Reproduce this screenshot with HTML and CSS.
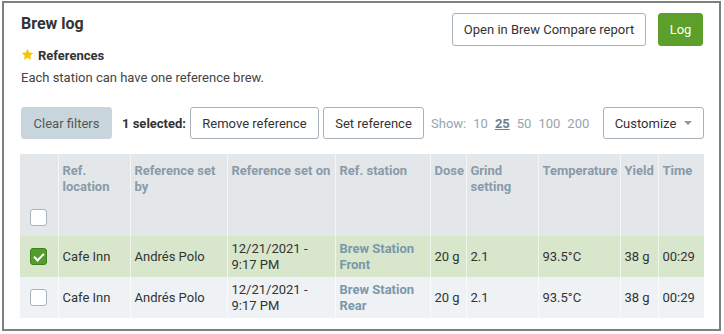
FILE: index.html
```html
<!DOCTYPE html>
<html lang="en">
<head>
    <meta charset="UTF-8">
    <title>Brew log</title>
    <link rel="stylesheet" href="styles.css">
</head>
<body>
    <div class="frame">
        <div class="top">
            <div class="intro">
                <h1 class="title">Brew log</h1>
                <div class="refs">
                    <svg class="star" width="13" height="13" viewBox="0 0 24 24"><path d="M12 1.5l3.1 7 7.6.7-5.7 5 1.7 7.5L12 17.8l-6.7 3.9 1.7-7.5-5.7-5 7.6-.7z" fill="#f7c600"/></svg>
                    <span>References</span>
                </div>
                <p class="desc">Each station can have one reference brew.</p>
            </div>
            <div class="actions">
                <a href="#" class="btn btn-report">Open in Brew Compare report</a>
                <a href="#" class="btn btn-green">Log</a>
            </div>
        </div>

        <div class="toolbar">
            <a href="#" class="btn btn-clear">Clear filters</a>
            <span class="selected">1 selected:</span>
            <a href="#" class="btn btn-remove">Remove reference</a>
            <a href="#" class="btn btn-set">Set reference</a>
            <div class="show">
                <span>Show:</span>
                <a href="#">10</a>
                <a href="#" class="current">25</a>
                <a href="#">50</a>
                <a href="#">100</a>
                <a href="#">200</a>
            </div>
            <a href="#" class="btn btn-custom">Customize <span class="caret"></span></a>
        </div>

        <table class="brews">
            <colgroup>
                <col style="width: 38px">
                <col style="width: 72px">
                <col style="width: 97px">
                <col style="width: 108px">
                <col style="width: 95px">
                <col style="width: 36px">
                <col style="width: 72px">
                <col style="width: 82px">
                <col style="width: 38px">
                <col style="width: 46px">
            </colgroup>
            <thead>
                <tr class="labels">
                    <th></th>
                    <th>Ref. location</th>
                    <th>Reference set by</th>
                    <th>Reference set on</th>
                    <th>Ref. station</th>
                    <th>Dose</th>
                    <th>Grind setting</th>
                    <th>Temperature</th>
                    <th>Yield</th>
                    <th>Time</th>
                </tr>
                <tr class="filters">
                    <th><span class="check"></span></th>
                    <th></th><th></th><th></th><th></th><th></th><th></th><th></th><th></th><th></th>
                </tr>
            </thead>
            <tbody>
                <tr class="picked">
                    <td><span class="check on"></span></td>
                    <td>Cafe Inn</td>
                    <td>Andrés Polo</td>
                    <td>12/21/2021 -<br>9:17 PM</td>
                    <td><a href="#" class="station">Brew Station Front</a></td>
                    <td>20 g</td>
                    <td>2.1</td>
                    <td>93.5°C</td>
                    <td>38 g</td>
                    <td>00:29</td>
                </tr>
                <tr>
                    <td><span class="check"></span></td>
                    <td>Cafe Inn</td>
                    <td>Andrés Polo</td>
                    <td>12/21/2021 -<br>9:17 PM</td>
                    <td><a href="#" class="station">Brew Station Rear</a></td>
                    <td>20 g</td>
                    <td>2.1</td>
                    <td>93.5°C</td>
                    <td>38 g</td>
                    <td>00:29</td>
                </tr>
            </tbody>
        </table>
    </div>
</body>
</html>
```

FILE: styles.css
```css
*{
    margin: 0;
    padding: 0;
    box-sizing: border-box;
}
body{
    font-family: Roboto, "Liberation Sans", sans-serif;
    font-size: 13px;
    color: #333;
    background: #fff;
}
a{
    text-decoration: none;
    color: inherit;
}
.frame{
    width: 719px;
    height: 330px;
    margin: 1px 0 0 2px;
    border: 2px solid #7f7f7f;
    padding: 10px 15px 0 16px;
}
.top{
    display: flex;
    justify-content: space-between;
}
.title{
    font-size: 16px;
    font-weight: bold;
    line-height: 20px;
    margin-top: 1px;
    margin-left: 1px;
    color: #333;
}
.refs{
    display: flex;
    align-items: center;
    gap: 4px;
    margin-top: 13px;
    font-weight: bold;
    line-height: 18px;
}
.star{
    margin-left: 1px;
    margin-top: -3px;
}
.desc{
    margin-top: 4px;
    line-height: 18px;
    margin-left: 1px;
    color: #444;
}
.actions{
    display: flex;
    gap: 12px;
}
.btn{
    display: inline-flex;
    align-items: center;
    justify-content: center;
    height: 33px;
    padding: 0 10px;
    border: 1px solid #a7b1ba;
    border-radius: 3px;
    background: #fff;
    color: #333;
    white-space: nowrap;
}
.btn-report{
    width: 194px;
}
.btn-green{
    background: #5c9f2a;
    border-color: #5c9f2a;
    color: #fff;
    width: 45px;
    margin-right: 1px;
}
.toolbar{
    display: flex;
    align-items: center;
    gap: 4px;
    margin-top: 20px;
}
.toolbar .btn{
    height: 32px;
}
.btn-clear{
    background: #c9d5dd;
    border-color: #c9d5dd;
    color: #555;
    width: 91px;
    margin-left: 1px;
}
.selected{
    font-weight: bold;
    margin-left: 6px;
}
.btn-remove{
    width: 129px;
}
.btn-set{
    width: 101px;
}
.show{
    display: flex;
    gap: 7px;
    margin-left: 3px;
    color: #97a5b1;
}
.show .current{
    color: #6f8190;
    font-weight: bold;
    text-decoration: underline;
}
.btn-custom{
    margin-left: auto;
    width: 101px;
    gap: 8px;
}
.caret{
    width: 0;
    height: 0;
    border-left: 4px solid transparent;
    border-right: 4px solid transparent;
    border-top: 4px solid #8a96a0;
}
.brews{
    margin-top: 15px;
    width: 684px;
    border-collapse: collapse;
    table-layout: fixed;
}
.brews th,
.brews td{
    padding: 0 3px 0 4px;
    text-align: left;
    border-left: 1px solid rgba(255, 255, 255, .6);
}
.brews th:first-child,
.brews td:first-child{
    border-left: 0;
    padding: 0 0 0 10px;
}
.brews thead tr{
    background: #e3e7ea;
}
.labels th{
    height: 51px;
    padding-top: 9px;
    vertical-align: top;
    line-height: 16px;
    font-weight: bold;
    color: #8a9aa8;
}
.filters th{
    height: 31px;
    vertical-align: top;
}
.filters th:first-child{
    padding-top: 4px;
}
.brews td{
    height: 41px;
    vertical-align: middle;
    line-height: 16px;
}
.brews tbody tr{
    background: #eef2f4;
}
.brews tbody tr.picked{
    background: #d8e7cb;
}
.station{
    font-weight: bold;
    color: #7a97ab;
}
.check{
    display: block;
    width: 17px;
    height: 17px;
    border: 1px solid #a9b3bb;
    border-radius: 3px;
    background: #fff;
    position: relative;
}
.check.on{
    background: #539d2c;
    border-color: #3f7f20;
}
.check.on:after{
    content: "";
    position: absolute;
    left: 5px;
    top: 2px;
    width: 4px;
    height: 8px;
    border: solid #fff;
    border-width: 0 2px 2px 0;
    transform: rotate(45deg);
}
```
